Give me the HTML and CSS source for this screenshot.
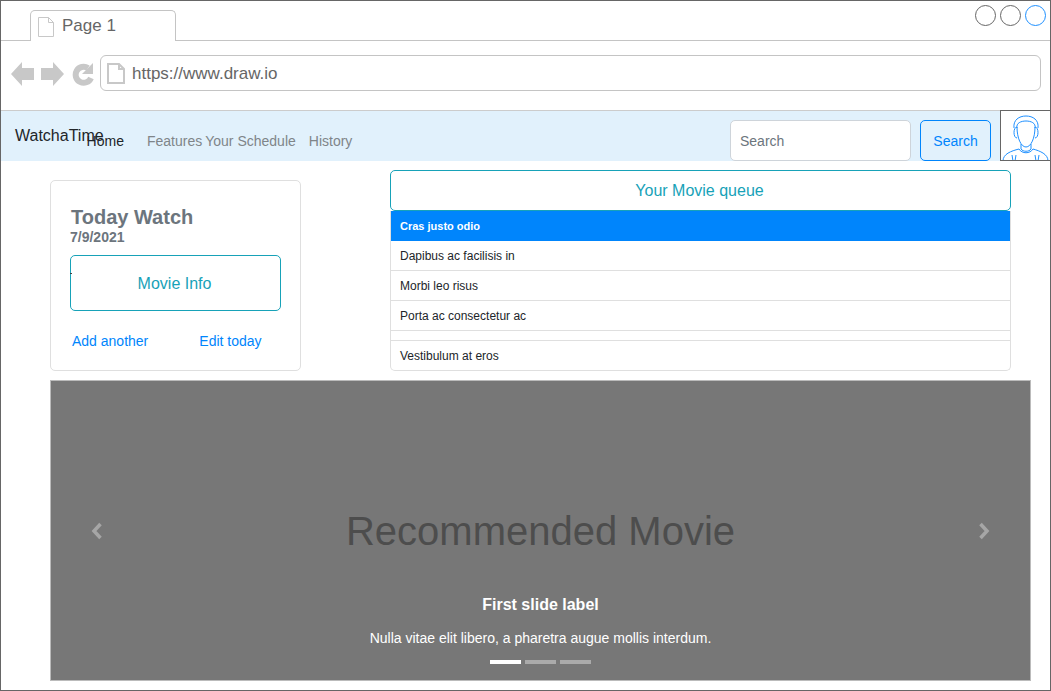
FILE: index.html
```html
<!DOCTYPE html>
<html lang="en">
<head>
  <meta charset="UTF-8" />
  <title>WatchaTime</title>
  <link rel="stylesheet" href="styles.css">
</head>
<body>
  <div class="window">
    <div class="tabstrip">
      <div class="tab">
        <svg class="doc" width="16" height="20" viewBox="0 0 16 20"><path d="M.5.5h10l5 5v14H.5zM10.500.5v5h5" fill="#fff" stroke="#c8c8c8"/></svg>
        <span>Page 1</span>
      </div>
      <div class="win-buttons">
        <span class="win-btn"></span>
        <span class="win-btn"></span>
        <span class="win-btn win-btn-active"></span>
      </div>
    </div>

    <div class="toolbar">
      <div class="nav-icons">
        <svg width="23" height="24" viewBox="0 0 23 24"><path d="M0 12 11 0v6h12v12H11v6z" fill="#c8c8c8"/></svg>
        <svg width="23" height="24" viewBox="0 0 23 24"><path d="M23 12 12 0v6H0v12h12v6z" fill="#c8c8c8"/></svg>
        <svg width="23" height="24" viewBox="0 0 23 24"><path d="M20 16a8 8 0 1 1-3-10" fill="none" stroke="#c8c8c8" stroke-width="6"/><path d="M22 1v11H11z" fill="#c8c8c8"/></svg>
      </div>
      <div class="address">
        <svg width="18" height="21" viewBox="0 0 18 21"><path d="M1 1h11l5 5v14H1zM12 1v5h5" fill="#fff" stroke="#c8c8c8" stroke-width="2"/></svg>
        <span>https://www.draw.io</span>
      </div>
    </div>

    <nav class="navbar">
      <a class="brand">WatchaTime</a>
      <a class="nav-link nav-home">Home</a>
      <a class="nav-link nav-features">Features</a>
      <a class="nav-link nav-schedule">Your Schedule</a>
      <a class="nav-link">History</a>
      <div class="nav-search">
        <input class="search-input" type="text" placeholder="Search" />
        <button class="search-btn">Search</button>
      </div>
      <div class="avatar">
        <svg width="49" height="50" viewBox="0 0 49 50" fill="none" stroke="#1e90ff">
          <path d="M13 17c-1-8 5-12 12-12s13 4 12 12"/>
          <path d="M16 17c-1-5 4-7 9-7s10 2 9 7"/>
          <path d="M16 16c0 11 4 20 9 20s9-9 9-20"/>
          <path d="M16 16c-4 0-4 11 0 11M34 16c4 0 4 11 0 11"/>
          <path d="M20 33v5c2 3 8 3 10 0v-5"/>
          <path d="M18 38c3 5 11 5 14 0"/>
          <path d="M2 50c0-7 8-10 16-12M47 50c0-7-8-10-15-12"/>
          <path d="M11 44l1 6M15 44l-1 6M38 44l-1 6M34 44l1 6"/>
        </svg>
      </div>
    </nav>

    <main class="content">
      <div class="top-row">
        <section class="card">
          <h2 class="card-title">Today Watch</h2>
          <div class="card-date">7/9/2021</div>
          <button class="outline-btn movie-info">Movie Info</button>
          <div class="card-links">
            <a>Add another</a>
            <a>Edit today</a>
          </div>
        </section>

        <section class="queue">
          <button class="outline-btn queue-btn">Your Movie queue</button>
          <ul class="list">
            <li class="list-item active">Cras justo odio</li>
            <li class="list-item">Dapibus ac facilisis in</li>
            <li class="list-item">Morbi leo risus</li>
            <li class="list-item">Porta ac consectetur ac</li>
            <li class="list-item empty"></li>
            <li class="list-item">Vestibulum at eros</li>
          </ul>
        </section>
      </div>

      <section class="carousel">
        <svg class="arrow arrow-left" width="12" height="18" viewBox="0 0 12 18"><path d="M9.500 2 3 9l6.500 7" fill="none" stroke="#a6a6a6" stroke-width="3.500"/></svg>
        <svg class="arrow arrow-right" width="12" height="18" viewBox="0 0 12 18"><path d="M2.500 2 9 9l-6.500 7" fill="none" stroke="#a6a6a6" stroke-width="3.500"/></svg>
        <h1 class="slide-title">Recommended Movie</h1>
        <h3 class="slide-label">First slide label</h3>
        <p class="slide-text">Nulla vitae elit libero, a pharetra augue mollis interdum.</p>
        <div class="indicators">
          <span class="indicator on"></span>
          <span class="indicator"></span>
          <span class="indicator"></span>
        </div>
      </section>
    </main>
  </div>
</body>
</html>
```

FILE: styles.css
```css
* {
  box-sizing: border-box;
}
body {
  margin: 0;
  font-family: "Liberation Sans", Arial, sans-serif;
  background-color: white;
  color: #212529;
}
.window {
  width: 1051px;
  height: 691px;
  border: 1px solid #666;
  overflow: hidden;
}

/* browser chrome */
.tabstrip {
  height: 40px;
  padding-left: 29px;
  border-bottom: 1px solid #c4c4c4;
  display: flex;
  justify-content: space-between;
}
.tab {
  width: 146px;
  height: 31px;
  margin-top: 9px;
  padding-left: 7px;
  display: flex;
  align-items: center;
  gap: 8px;
  background-color: white;
  border: 1px solid #c4c4c4;
  border-bottom: none;
  border-radius: 5px 5px 0 0;
  font-size: 17px;
  color: #666;
}
.tab .doc {
  margin-top: 1px;
}
.win-buttons {
  display: flex;
  gap: 4px;
  padding: 4px 4px 0 0;
}
.win-btn {
  width: 21px;
  height: 21px;
  border: 1px solid #666;
  border-radius: 50%;
}
.win-btn-active {
  border-color: #1e90ff;
}
.toolbar {
  height: 69px;
  padding: 14px 9px 0 10px;
  display: flex;
  gap: 6px;
}
.nav-icons {
  display: flex;
  align-items: center;
  gap: 7px;
  height: 38px;
}
.address {
  flex: 1;
  height: 36px;
  padding: 1px 0 0 6px;
  display: flex;
  align-items: center;
  gap: 7px;
  border: 1px solid #c4c4c4;
  border-radius: 6px;
  font-size: 17px;
  color: #666;
}

/* navbar */
.navbar {
  height: 51px;
  padding-left: 14px;
  display: flex;
  align-items: center;
  background-color: #e1f1fc;
  border-top: 1px solid #ccc;
  font-size: 14px;
}
.brand {
  margin-right: -17px;
  font-size: 16px;
  color: #212529;
}
.nav-link {
  margin-top: 10px;
  color: #7f8589;
}
.nav-home {
  color: #212529;
  margin-right: 23px;
}
.nav-features {
  margin-right: 3px;
}
.nav-schedule {
  margin-right: 13px;
}
.nav-search {
  margin-left: auto;
  display: flex;
  gap: 9px;
  margin-right: 9px;
  padding-top: 9px;
  height: 50px;
}
.search-input {
  width: 181px;
  height: 41px;
  padding: 0 9px;
  border: 1px solid #ced4da;
  border-radius: 5px;
  font: inherit;
  background-color: white;
}
.search-input::placeholder {
  color: #6c757d;
  opacity: 1;
}
.search-btn {
  width: 71px;
  height: 41px;
  border: 1px solid #0085fc;
  border-radius: 5px;
  background-color: #e1f1fc;
  color: #0085fc;
  font: inherit;
}
.avatar {
  width: 50px;
  height: 51px;
  margin-top: -1px;
  background-color: white;
  border-left: 1px solid #666;
  border-top: 1px solid #666;
  border-bottom: 1px solid #666;
  overflow: hidden;
}

/* content */
.content {
  padding: 9px 19px 0 49px;
}
.top-row {
  display: flex;
  align-items: flex-end;
  gap: 89px;
}
.card {
  width: 251px;
  height: 191px;
  padding: 25px 20px 0;
  border: 1px solid #dfdfdf;
  border-radius: 5px;
}
.card-title {
  margin: 0;
  font-size: 20px;
  line-height: 22px;
  color: #6c757d;
}
.card-date {
  font-size: 14px;
  font-weight: bold;
  line-height: 16px;
  margin: 1px 0 0 -1px;
  color: #6c757d;
}
.outline-btn {
  display: block;
  background-color: white;
  border: 1px solid #17a2b8;
  border-radius: 5px;
  color: #17a2b8;
  font-family: inherit;
  font-size: 16px;
}
.movie-info {
  position: relative;
  width: 211px;
  height: 56px;
  margin: 10px 0 0 -1px;
  padding: 1px 8px 0 6px;
}
.movie-info::before {
  content: "";
  position: absolute;
  left: -1px;
  top: 17px;
  width: 2px;
  height: 1px;
  background-color: #444;
}
.card-links {
  display: flex;
  margin-top: 22px;
  font-size: 14px;
  line-height: 16px;
  color: #0085fc;
  gap: 51px;
  padding-left: 1px;
}
.queue {
  width: 621px;
}
.queue-btn {
  width: 621px;
  height: 41px;
  padding-right: 8px;
}
.list {
  list-style: none;
  margin: 0;
  padding: 0;
  border: 1px solid #dfdfdf;
  border-top: none;
  border-radius: 0 0 5px 5px;
  overflow: hidden;
  font-size: 12px;
}
.list-item {
  height: 30px;
  line-height: 31px;
  padding-left: 9px;
  border-bottom: 1px solid #dfdfdf;
}
.list-item:last-child {
  height: 29px;
  border-bottom: none;
}
.list-item.active {
  background-color: #0085fc;
  color: white;
  font-size: 11px;
  font-weight: bold;
  margin: 0 -1px;
  padding-left: 10px;
  border-bottom: none;
}
.list-item.empty {
  height: 10px;
}
.carousel {
  position: relative;
  width: 981px;
  height: 301px;
  margin-top: 9px;
  padding-top: 127px;
  background-color: #777;
  border: 1px solid #bbb;
  text-align: center;
  color: white;
}
.arrow {
  position: absolute;
  top: 141px;
}
.arrow-left {
  left: 40px;
}
.arrow-right {
  right: 40px;
}
.slide-title {
  margin: 0;
  font-size: 40px;
  line-height: 46px;
  font-weight: normal;
  color: #4d4d4d;
}
.slide-label {
  margin: 42px 0 0;
  font-size: 16px;
  line-height: 18px;
  font-weight: bold;
}
.slide-text {
  margin: 16px 0 0;
  font-size: 14px;
  line-height: 16px;
}
.indicators {
  display: flex;
  justify-content: center;
  gap: 4px;
  margin-top: 14px;
}
.indicator {
  width: 31px;
  height: 4px;
  background-color: #aaa;
}
.indicator.on {
  background-color: white;
}
```
